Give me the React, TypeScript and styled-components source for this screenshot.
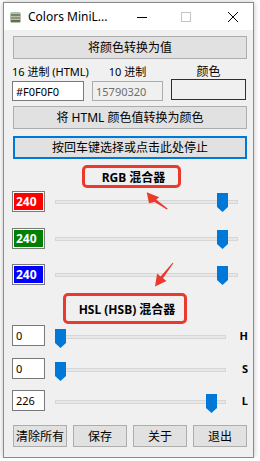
import React from "react";
import styled, { createGlobalStyle } from "styled-components";

const GlobalStyle = createGlobalStyle`
  html, body {
    margin: 0;
    padding: 0;
    background: #ffffff;
  }
  body {
    font-family: "Noto Sans", "Noto Sans CJK SC", sans-serif;
    color: #000;
  }
`;

const UI_FONT = `"Noto Sans", "Noto Sans CJK SC", sans-serif`;

type RowSpec = { value: number; max: number; fill?: string; axis?: string };

const rgbRows: RowSpec[] = [
  { value: 240, max: 255, fill: "#ff0000" },
  { value: 240, max: 255, fill: "#008000" },
  { value: 240, max: 255, fill: "#0000ff" },
];

const hslRows: RowSpec[] = [
  { value: 0, max: 240, axis: "H" },
  { value: 0, max: 240, axis: "S" },
  { value: 226, max: 240, axis: "L" },
];

function Slider({ value, max, trackTop, thumbTop }: { value: number; max: number; trackTop: number; thumbTop: number }) {
  return (
    <SliderBox>
      <Track $top={trackTop} />
      <Thumb
        $top={thumbTop}
        viewBox="0 0 11 19"
        style={{ left: `calc((100% - 11px) * ${value / max})` }}
      >
        <path d="M0 0H11V14L5.5 19L0 14Z" fill="#0078d7" />
      </Thumb>
    </SliderBox>
  );
}

export default function App() {
  return (
    <>
      <GlobalStyle />
      <Window>
        <TitleBar>
          <AppIcon viewBox="0 0 11 11">
            <rect x="0" y="0" width="11" height="11" rx="2" fill="#b9bfb3" />
            <rect x="1" y="2" width="9" height="2" fill="#6f8a68" />
            <rect x="1" y="5" width="9" height="2" fill="#8e9a6a" />
            <rect x="1" y="8" width="9" height="2" fill="#5f6f5f" />
          </AppIcon>
          <Title>Colors MiniL...</Title>
          <Controls>
            <ControlIcon $gap={0} viewBox="0 0 10 10">
              <line x1="0" y1="5.5" x2="10" y2="5.5" stroke="#000" strokeWidth="1" />
            </ControlIcon>
            <ControlIcon $gap={34} viewBox="0 0 10 10">
              <rect x="0.5" y="0.5" width="9" height="9" fill="none" stroke="#c4c4c4" strokeWidth="1" />
            </ControlIcon>
            <ControlIcon $gap={37} viewBox="0 0 10 10">
              <path d="M0 0L10 10M10 0L0 10" stroke="#000" strokeWidth="1" />
            </ControlIcon>
          </Controls>
        </TitleBar>

        <Content>
          <WinButton>将颜色转换为值</WinButton>

          <Fields>
            <FieldLabel>16 进制 (HTML)</FieldLabel>
            <FieldLabel>10 进制</FieldLabel>
            <FieldLabel $large>颜色</FieldLabel>
            <TextBox>#F0F0F0</TextBox>
            <TextBox $readOnly>15790320</TextBox>
            <Swatch />
          </Fields>

          <WinButton $marginTop={5}>将 HTML 颜色值转换为颜色</WinButton>
          <WinButton $marginTop={7} $focused>按回车键选择或点击此处停止</WinButton>

          <MixerTitle $left={70} $width={99} $height={23} $marginTop={6}>
            RGB 混合器
          </MixerTitle>
          <Rows $marginTop={3} $gap={15.5}>
            {rgbRows.map((row, i) => (
              <MixerRow key={i} $track={183}>
                <ValueSwatch $fill={row.fill!}>{row.value}</ValueSwatch>
                <Slider value={row.value} max={row.max} trackTop={9} thumbTop={2} />
              </MixerRow>
            ))}
          </Rows>

          <MixerTitle $left={51} $width={124} $height={31} $marginTop={8}>
            HSL (HSB) 混合器
          </MixerTitle>
          <Rows $marginTop={1} $gap={11.5}>
            {hslRows.map((row, i) => (
              <MixerRow key={i} $track={171} $withAxis>
                <NumberBox>{row.value}</NumberBox>
                <Slider value={row.value} max={row.max} trackTop={10} thumbTop={4} />
                <AxisLabel>{row.axis}</AxisLabel>
              </MixerRow>
            ))}
          </Rows>

          <Footer>
            <FooterButton>清除所有</FooterButton>
            <FooterButton>保存</FooterButton>
            <FooterButton>关于</FooterButton>
            <FooterButton>退出</FooterButton>
          </Footer>
        </Content>

        <Annotations viewBox="0 0 260 461">
          <polygon
            points="146.7,192.3 159.3,197.3 156.2,199.6 167.8,208.8 166.8,209.6 154.6,201.9 149,203.3"
            fill="#ea3a2d"
          />
          <polygon
            points="155,286.5 157.1,273.6 160.6,276.4 172.6,262.7 173.4,263.3 163,278.2 166.5,281"
            fill="#ea3a2d"
          />
        </Annotations>
      </Window>
    </>
  );
}

const Window = styled.div`
  position: relative;
  box-sizing: border-box;
  width: 251px;
  height: 456px;
  margin: 2px 0 0 3px;
  border: 1px solid #8a8a8a;
  background: #f0f0f0;
  box-shadow: 0 0 6px rgba(0, 0, 0, 0.25);
  display: flex;
  flex-direction: column;
`;

const TitleBar = styled.div`
  height: 27px;
  flex: none;
  background: #ffffff;
  display: flex;
  align-items: center;
  padding-left: 6px;
`;

const AppIcon = styled.svg`
  width: 11px;
  height: 11px;
  margin-right: 7px;
  margin-top: 2px;
`;

const Title = styled.span`
  font-family: ${UI_FONT};
  font-size: 12px;
  white-space: nowrap;
`;

const Controls = styled.div`
  margin-left: auto;
  display: flex;
  align-items: center;
  padding-right: 15px;
`;

const ControlIcon = styled.svg<{ $gap: number }>`
  width: 10px;
  height: 10px;
  margin-left: ${(p) => p.$gap}px;
`;

const Content = styled.div`
  display: flex;
  flex-direction: column;
  padding: 6px 6px 0 8px;
`;

const WinButton = styled.button<{ $marginTop?: number; $focused?: boolean }>`
  box-sizing: border-box;
  height: 23px;
  margin: ${(p) => p.$marginTop ?? 0}px 0 0 1px;
  padding: 0;
  background: #e1e1e1;
  border: ${(p) => (p.$focused ? "2px solid #0078d7" : "1px solid #adadad")};
  font-family: ${UI_FONT};
  font-size: 12px;
  color: #000;
  line-height: 1;
`;

const Fields = styled.div`
  display: grid;
  grid-template-columns: 72px 71px 75px;
  grid-template-rows: 20px auto;
  column-gap: 8px;
`;

const FieldLabel = styled.div<{ $large?: boolean }>`
  align-self: end;
  text-align: center;
  font-size: ${(p) => (p.$large ? 12 : 11)}px;
  line-height: 14px;
  white-space: nowrap;
`;

const TextBox = styled.div<{ $readOnly?: boolean }>`
  box-sizing: border-box;
  height: 20px;
  margin-top: 2px;
  padding: 0 3px;
  display: flex;
  align-items: center;
  font-size: 11px;
  background: ${(p) => (p.$readOnly ? "#f0f0f0" : "#ffffff")};
  color: ${(p) => (p.$readOnly ? "#6d6d6d" : "#000")};
  border: 1px solid ${(p) => (p.$readOnly ? "#acacac" : "#7a7a7a")};
`;

const Swatch = styled.div`
  box-sizing: border-box;
  height: 21px;
  border: 1px solid #2f2f2f;
  background: #f0f0f0;
`;

const MixerTitle = styled.div<{ $left: number; $width: number; $height: number; $marginTop: number }>`
  box-sizing: border-box;
  align-self: flex-start;
  width: ${(p) => p.$width}px;
  height: ${(p) => p.$height}px;
  margin: ${(p) => p.$marginTop}px 0 0 ${(p) => p.$left}px;
  border: 3px solid #ea3a2d;
  border-radius: 5px;
  display: flex;
  align-items: center;
  justify-content: center;
  padding-left: 4px;
  font-size: 12px;
  font-weight: 700;
  white-space: nowrap;
`;

const Rows = styled.div<{ $marginTop: number; $gap: number }>`
  display: flex;
  flex-direction: column;
  gap: ${(p) => p.$gap}px;
  margin-top: ${(p) => p.$marginTop}px;
`;

const MixerRow = styled.div<{ $track: number; $withAxis?: boolean }>`
  display: grid;
  grid-template-columns: 33px ${(p) => p.$track}px ${(p) => (p.$withAxis ? "1fr" : "")};
  column-gap: 10px;
  height: 21px;
`;

const ValueSwatch = styled.div<{ $fill: string }>`
  box-sizing: border-box;
  border: 1px solid #7a7a7a;
  box-shadow: inset 0 0 0 1px #ffffff;
  background: ${(p) => p.$fill};
  color: #ffffff;
  font-size: 12px;
  font-weight: 700;
  line-height: 19px;
  padding-left: 3px;
`;

const NumberBox = styled.div`
  box-sizing: border-box;
  border: 1px solid #7a7a7a;
  background: #ffffff;
  font-size: 11px;
  line-height: 19px;
  padding-left: 3px;
`;

const SliderBox = styled.div`
  position: relative;
  height: 21px;
`;

const Track = styled.div<{ $top: number }>`
  position: absolute;
  left: 0;
  right: 0;
  top: ${(p) => p.$top}px;
  height: 4px;
  box-sizing: border-box;
  background: #e7e7e7;
  border: 1px solid #d6d6d6;
`;

const Thumb = styled.svg<{ $top: number }>`
  position: absolute;
  top: ${(p) => p.$top}px;
  width: 11px;
  height: 19px;
`;

const AxisLabel = styled.div`
  text-align: right;
  font-size: 11px;
  font-weight: 700;
  line-height: 21px;
  margin-right: -1px;
`;

const Footer = styled.div`
  display: flex;
  justify-content: space-between;
  margin: 14px 0 0 1px;
`;

const FooterButton = styled.button`
  box-sizing: border-box;
  width: 54px;
  height: 22px;
  padding: 0;
  background: #e1e1e1;
  border: 1px solid #adadad;
  font-family: ${UI_FONT};
  font-size: 12px;
  color: #000;
  white-space: nowrap;
`;

const Annotations = styled.svg`
  position: absolute;
  left: -4px;
  top: -3px;
  width: 260px;
  height: 461px;
  pointer-events: none;
  overflow: visible;
`;
